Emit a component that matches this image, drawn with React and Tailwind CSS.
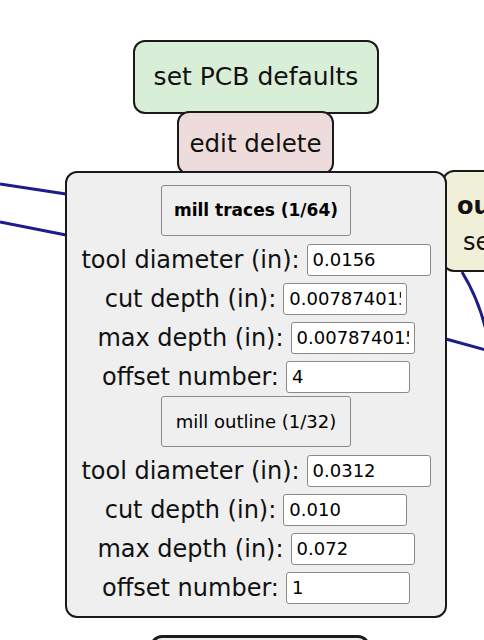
import React from 'react';

const font = { fontFamily: '"DejaVu Sans", "Liberation Sans", sans-serif' };

const Field = ({ label, value }) => (
  <div className="flex h-[39px] items-center justify-center gap-[7px]">
    <span className="text-[24px] leading-none text-[#111]">{label}</span>
    <input
      readOnly
      value={value}
      className="h-[32px] w-[124px] rounded-[3px] border border-[#8a8a8a] bg-white px-[5px] text-[18px] text-black outline-none"
    />
  </div>
);

const MillButton = ({ children, bold }) => (
  <button
    className={
      'h-[51px] w-[190px] rounded-[3px] border border-[#8a8a8a] bg-[#efefef] text-black ' +
      (bold ? 'text-[17px] font-bold' : 'text-[18px]')
    }
  >
    {children}
  </button>
);

const App = () => {
  return (
    <div className="relative h-[640px] w-[484px] overflow-hidden bg-white" style={font}>
      {/* wires */}
      <svg className="absolute left-0 top-0" width="484" height="640">
        <g stroke="#1c1c8c" strokeWidth="3" fill="none">
          <path d="M0 184 L66 194" />
          <path d="M0 222 L66 235" />
          <path d="M462 272 Q478 298 486 330" />
          <path d="M446 339 L486 350" />
        </g>
      </svg>

      {/* set PCB defaults */}
      <div className="absolute left-[133px] top-[40px] flex h-[74px] w-[246px] items-center justify-center rounded-[12px] border-2 border-[#1a1a1a] bg-[#d9eed6] text-[25px] text-[#111]">
        set PCB defaults
      </div>

      {/* edit delete */}
      <div className="absolute left-[177px] top-[111px] flex h-[64px] w-[157px] items-start justify-center rounded-[12px] border-2 border-[#1a1a1a] bg-[#eedcdc] pt-[13px] text-[24.5px] text-[#111]">
        edit delete
      </div>

      {/* right node */}
      <div className="absolute left-[442px] top-[170px] h-[102px] w-[200px] rounded-[12px] border-2 border-[#1a1a1a] bg-[#f0efd8] pl-[13px] pt-[18px] text-[24px] text-[#111]">
        <div className="font-bold leading-[32px]">output</div>
        <div className="pl-[6px] leading-[40px]">send</div>
      </div>

      {/* mill panel */}
      <div className="absolute left-[65px] top-[171px] flex h-[447px] w-[382px] flex-col items-center rounded-[12px] border-2 border-[#1a1a1a] bg-[#efefef] pt-[12px]">
        <MillButton bold>mill traces (1/64)</MillButton>
        <div className="mt-[4px] flex w-full flex-col">
          <Field label="tool diameter (in):" value="0.0156" />
          <Field label="cut depth (in):" value="0.007874015748031496" />
          <Field label="max depth (in):" value="0.007874015748031496" />
          <Field label="offset number:" value="4" />
        </div>
        <MillButton>mill outline (1/32)</MillButton>
        <div className="mt-[4px] flex w-full flex-col">
          <Field label="tool diameter (in):" value="0.0312" />
          <Field label="cut depth (in):" value="0.010" />
          <Field label="max depth (in):" value="0.072" />
          <Field label="offset number:" value="1" />
        </div>
      </div>

      {/* bottom node */}
      <div className="absolute left-[150px] top-[635px] h-[60px] w-[220px] rounded-[12px] border-[3px] border-[#1a1a1a] bg-[#efefef]" />
    </div>
  );
};

export default App;
